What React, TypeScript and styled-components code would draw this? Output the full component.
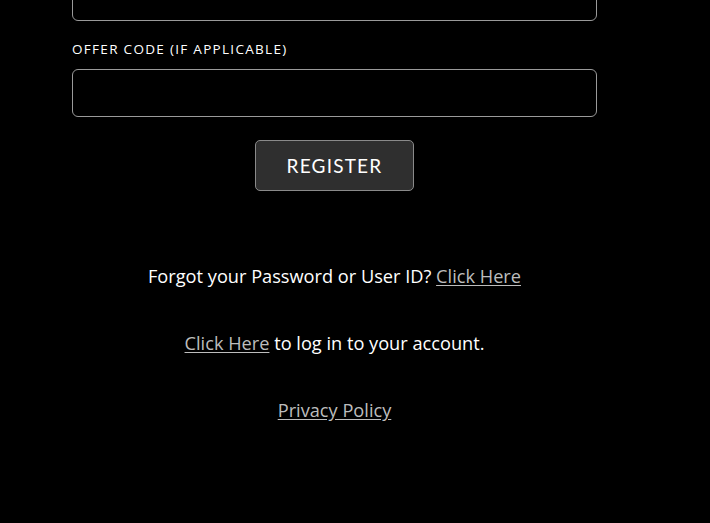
import React from "react";
import styled, { createGlobalStyle } from "styled-components";

const Global = createGlobalStyle`
  html, body { margin: 0; padding: 0; background: #000; }
  body { font-family: "Open Sans", "Noto Sans", sans-serif; color: #fff; overflow: hidden; }
  * { box-sizing: border-box; }
`;

const Page = styled.div`
  width: 710px;
  height: 523px;
  background: #000;
  overflow: hidden;
`;

const Column = styled.div`
  width: 525px;
  margin-left: 72px;
  margin-top: -27px;
  display: flex;
  flex-direction: column;
`;

const Form = styled.form`
  display: flex;
  flex-direction: column;
`;

const Input = styled.input`
  display: block;
  width: 100%;
  height: 48px;
  background: #000;
  border: 1px solid #9a9a9a;
  border-radius: 6px;
  color: #fff;
  font: inherit;
  padding: 0 12px;
  outline: none;
`;

const Label = styled.label`
  display: block;
  margin-top: 20px;
  margin-bottom: 12px;
  font-size: 13.5px;
  letter-spacing: 1.3px;
  line-height: 16px;
  color: #fff;
  text-transform: uppercase;
`;

const ButtonRow = styled.div`
  display: flex;
  justify-content: center;
  margin-top: 23px;
`;

const Button = styled.button`
  width: 159px;
  height: 51px;
  background: #2f2f2f;
  border: 1px solid #8a8a8a;
  border-radius: 5px;
  color: #fff;
  font-family: Lato, "Open Sans", sans-serif;
  font-size: 19px;
  letter-spacing: 1.2px;
  text-transform: uppercase;
  cursor: pointer;
`;

const Links = styled.div`
  display: flex;
  flex-direction: column;
  align-items: center;
  margin-top: 73px;
  gap: 43px;
`;

const Line = styled.p`
  margin: 0;
  font-size: 18.2px;
  line-height: 24px;
  text-align: center;
  color: #fff;
  white-space: nowrap;
`;

const Link = styled.a`
  color: #bdbdbd;
  text-decoration: underline;
  text-underline-offset: 2px;
`;

export default function App() {
  return (
    <Page>
      <Global />
      <Column>
        <Form onSubmit={(e) => e.preventDefault()}>
          <Input type="text" aria-label="previous field" />
          <Label htmlFor="offer">Offer Code (if applicable)</Label>
          <Input id="offer" type="text" />
          <ButtonRow>
            <Button type="submit">Register</Button>
          </ButtonRow>
        </Form>
        <Links>
          <Line>
            Forgot your Password or User ID? <Link href="#">Click Here</Link>
          </Line>
          <Line>
            <Link href="#">Click Here</Link> to log in to your account.
          </Line>
          <Line>
            <Link href="#">Privacy Policy</Link>
          </Line>
        </Links>
      </Column>
    </Page>
  );
}
